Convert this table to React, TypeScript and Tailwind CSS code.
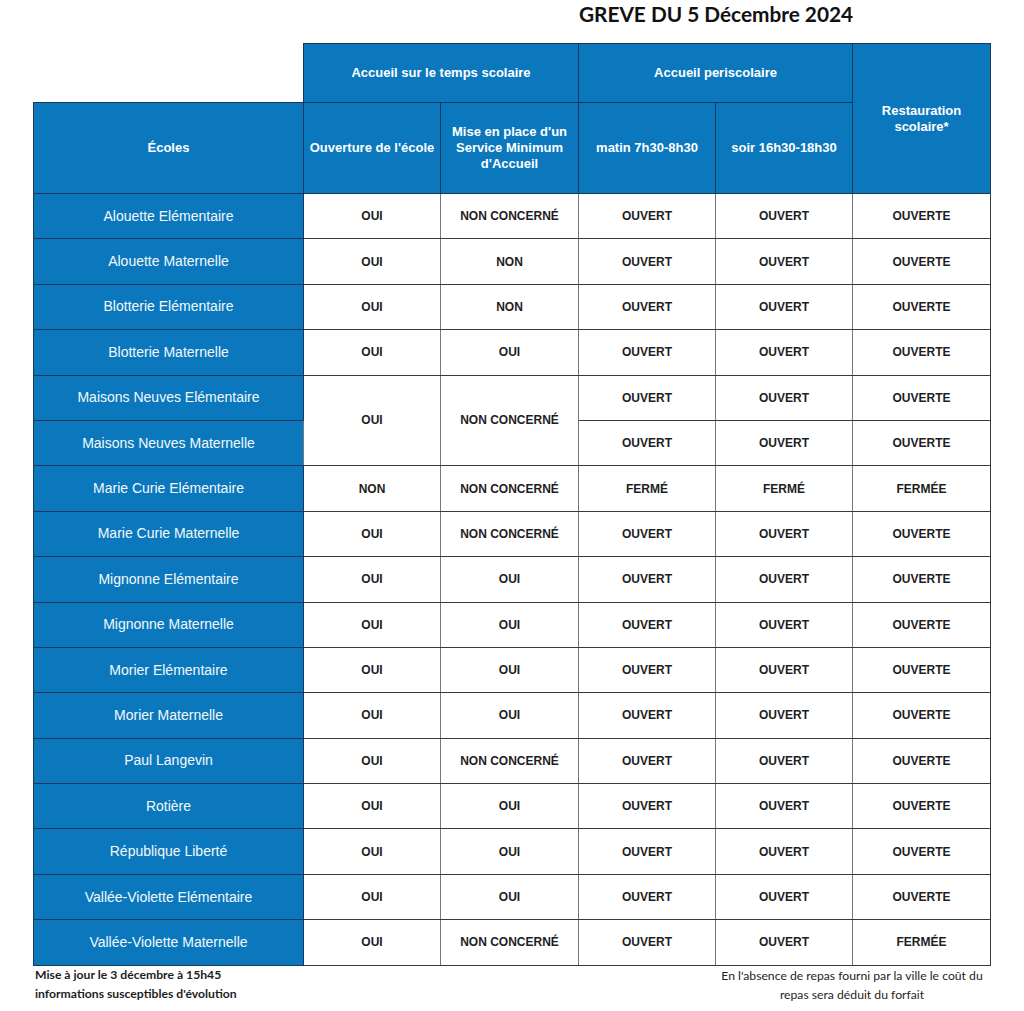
import React from "react";

type Row = {
  name: string;
  ouverture?: string;
  sma?: string;
  matin: string;
  soir: string;
  resto: string;
  span?: boolean;
};

const rows: Row[] = [
  { name: "Alouette Elémentaire", ouverture: "OUI", sma: "NON CONCERNÉ", matin: "OUVERT", soir: "OUVERT", resto: "OUVERTE" },
  { name: "Alouette Maternelle", ouverture: "OUI", sma: "NON", matin: "OUVERT", soir: "OUVERT", resto: "OUVERTE" },
  { name: "Blotterie Elémentaire", ouverture: "OUI", sma: "NON", matin: "OUVERT", soir: "OUVERT", resto: "OUVERTE" },
  { name: "Blotterie Maternelle", ouverture: "OUI", sma: "OUI", matin: "OUVERT", soir: "OUVERT", resto: "OUVERTE" },
  { name: "Maisons Neuves Elémentaire", ouverture: "OUI", sma: "NON CONCERNÉ", matin: "OUVERT", soir: "OUVERT", resto: "OUVERTE", span: true },
  { name: "Maisons Neuves Maternelle", matin: "OUVERT", soir: "OUVERT", resto: "OUVERTE" },
  { name: "Marie Curie Elémentaire", ouverture: "NON", sma: "NON CONCERNÉ", matin: "FERMÉ", soir: "FERMÉ", resto: "FERMÉE" },
  { name: "Marie Curie Maternelle", ouverture: "OUI", sma: "NON CONCERNÉ", matin: "OUVERT", soir: "OUVERT", resto: "OUVERTE" },
  { name: "Mignonne Elémentaire", ouverture: "OUI", sma: "OUI", matin: "OUVERT", soir: "OUVERT", resto: "OUVERTE" },
  { name: "Mignonne Maternelle", ouverture: "OUI", sma: "OUI", matin: "OUVERT", soir: "OUVERT", resto: "OUVERTE" },
  { name: "Morier Elémentaire", ouverture: "OUI", sma: "OUI", matin: "OUVERT", soir: "OUVERT", resto: "OUVERTE" },
  { name: "Morier Maternelle", ouverture: "OUI", sma: "OUI", matin: "OUVERT", soir: "OUVERT", resto: "OUVERTE" },
  { name: "Paul Langevin", ouverture: "OUI", sma: "NON CONCERNÉ", matin: "OUVERT", soir: "OUVERT", resto: "OUVERTE" },
  { name: "Rotière", ouverture: "OUI", sma: "OUI", matin: "OUVERT", soir: "OUVERT", resto: "OUVERTE" },
  { name: "République Liberté", ouverture: "OUI", sma: "OUI", matin: "OUVERT", soir: "OUVERT", resto: "OUVERTE" },
  { name: "Vallée-Violette Elémentaire", ouverture: "OUI", sma: "OUI", matin: "OUVERT", soir: "OUVERT", resto: "OUVERTE" },
  { name: "Vallée-Violette Maternelle", ouverture: "OUI", sma: "NON CONCERNÉ", matin: "OUVERT", soir: "OUVERT", resto: "FERMÉE" },
];

const head = "border border-[#17385a] bg-[#0b78bd] text-white font-bold text-[13px] leading-[16px] text-center px-1";
const cell = "border border-[#3a3a3a] bg-white text-[#1e1e1e] font-bold text-[12px] text-center";

export default function App() {
  return (
    <div className="w-[1024px] h-[1011px] bg-white font-['Liberation_Sans',Arial,sans-serif]">
      <div className="h-[43px] pl-[579px] pt-[1px]">
        <h1 className="text-[20.8px] leading-[26px] font-bold text-[#111] font-['Lato','Open_Sans',sans-serif]">
          GREVE DU 5 Décembre 2024
        </h1>
      </div>

      <table className="ml-[33px] w-[957px] table-fixed border-collapse">
        <colgroup>
          <col className="w-[270px]" />
          <col className="w-[137px]" />
          <col className="w-[138px]" />
          <col className="w-[137px]" />
          <col className="w-[137px]" />
          <col className="w-[138px]" />
        </colgroup>
        <thead>
          <tr className="h-[59px]">
            <th className="border-0 bg-white" />
            <th colSpan={2} className={head}>Accueil sur le temps scolaire</th>
            <th colSpan={2} className={head}>Accueil periscolaire</th>
            <th rowSpan={2} className={`${head} px-3`}>Restauration scolaire*</th>
          </tr>
          <tr className="h-[91px]">
            <th className={head}>Écoles</th>
            <th className={head}>Ouverture de l'école</th>
            <th className={`${head} px-2`}>Mise en place d'un Service Minimum d'Accueil</th>
            <th className={head}>matin 7h30-8h30</th>
            <th className={head}>soir 16h30-18h30</th>
          </tr>
        </thead>
        <tbody>
          {rows.map((r) => (
            <tr key={r.name} className="h-[45.4px]">
              <td className="border border-[#17385a] bg-[#0b78bd] text-[#f4f8fb] text-[14px] text-center">
                {r.name}
              </td>
              {r.ouverture !== undefined && (
                <td rowSpan={r.span ? 2 : 1} className={`${cell} border-x-[#777]`}>{r.ouverture}</td>
              )}
              {r.sma !== undefined && (
                <td rowSpan={r.span ? 2 : 1} className={`${cell} border-x-[#777]`}>{r.sma}</td>
              )}
              <td className={`${cell} border-x-[#777]`}>{r.matin}</td>
              <td className={`${cell} border-x-[#777]`}>{r.soir}</td>
              <td className={`${cell} border-l-[#777]`}>{r.resto}</td>
            </tr>
          ))}
        </tbody>
      </table>

      <div className="flex justify-between w-[957px] ml-[33px] font-['Lato','Open_Sans',sans-serif] text-[12.2px] leading-[19px] text-[#1e1e1e]">
        <div className="pl-[2px] font-bold -mt-[1px]">
          <p>Mise à jour le 3 décembre à 15h45</p>
          <p>informations susceptibles d'évolution</p>
        </div>
        <div className="w-[276px] text-center">
          <p>En l'absence de repas fourni par la ville le coût du</p>
          <p>repas sera déduit du forfait</p>
        </div>
      </div>
    </div>
  );
}
